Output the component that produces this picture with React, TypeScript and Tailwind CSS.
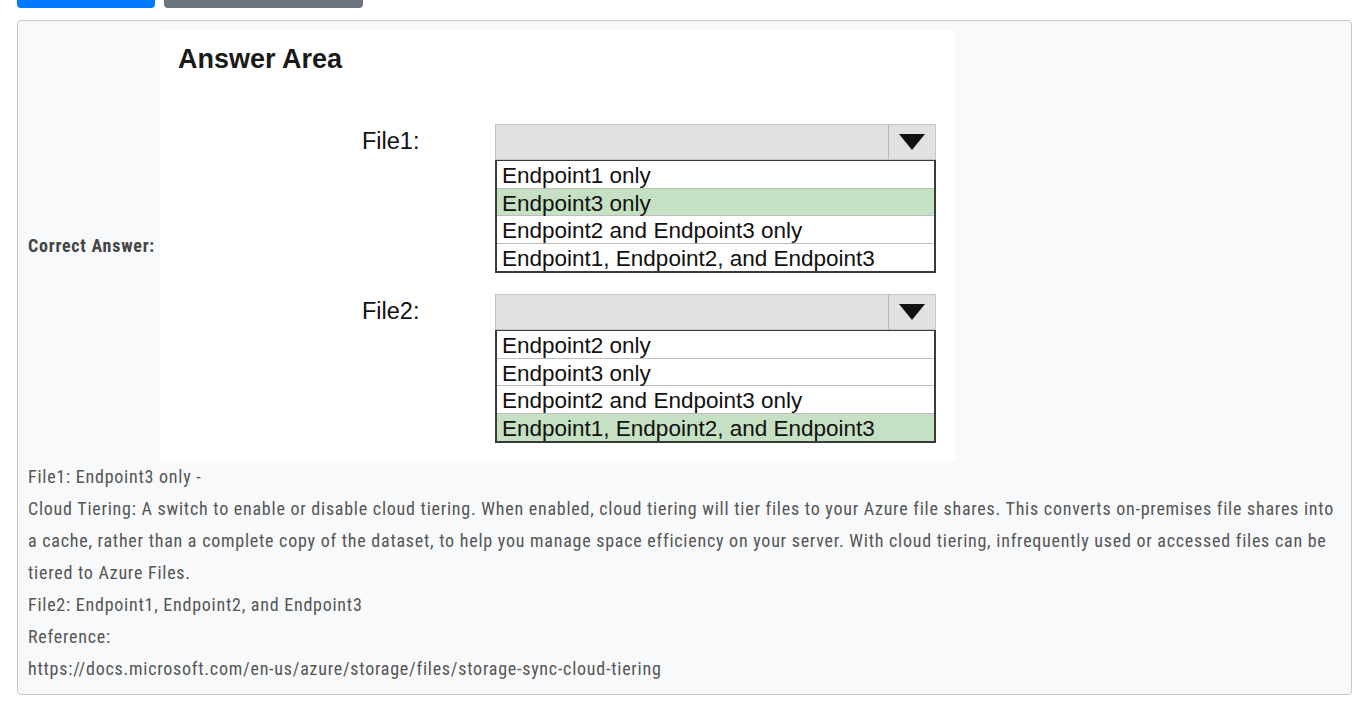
import React from 'react';

const file1 = [
  { text: 'Endpoint1 only', ok: false },
  { text: 'Endpoint3 only', ok: true },
  { text: 'Endpoint2 and Endpoint3 only', ok: false },
  { text: 'Endpoint1, Endpoint2, and Endpoint3', ok: false },
];

const file2 = [
  { text: 'Endpoint2 only', ok: false },
  { text: 'Endpoint3 only', ok: false },
  { text: 'Endpoint2 and Endpoint3 only', ok: false },
  { text: 'Endpoint1, Endpoint2, and Endpoint3', ok: true },
];

function Dropdown({ label, options }: { label: string; options: { text: string; ok: boolean }[] }) {
  return (
    <div className="flex">
      <div className="w-[133px] ml-[202px] pt-[1px] text-[23.5px] leading-[32px] text-[#111]">{label}</div>
      <div className="w-[441px]">
        {/* closed select */}
        <div className="h-[36px] flex bg-[#e1e1e1] border border-[#c4c4c4]">
          <div className="flex-1" />
          <div className="w-[47px] border-l border-[#b9b9b9] flex items-center justify-center">
            <svg width="26" height="16" viewBox="0 0 26 16">
              <polygon points="0,0 26,0 13,16" fill="#111" />
            </svg>
          </div>
        </div>
        {/* option list */}
        <div className="border-2 border-[#3a3a3a] border-t-[1.5px]">
          {options.map((o, i) => (
            <div
              key={o.text}
              className={`h-[27.5px] pl-[5px] pt-[1px] text-[22.5px] leading-[27px] text-[#111] ${
                i < options.length - 1 ? 'border-b border-[#bdbdbd]' : ''
              } ${o.ok ? 'bg-[#c5e0c3]' : 'bg-white'}`}
            >
              {o.text}
            </div>
          ))}
        </div>
      </div>
    </div>
  );
}

export default function App() {
  return (
    <div className="min-h-screen bg-white font-['Roboto',sans-serif] [font-stretch:condensed] tracking-[0.75px]">
      {/* Buttons, scrolled off the top */}
      <div className="flex gap-[9px] ml-[17px] -mt-[30px]">
        <button className="w-[138px] h-[38px] rounded bg-[#007bff]" />
        <button className="w-[199px] h-[38px] rounded bg-[#6c757d]" />
      </div>

      <div className="ml-[17px] mr-[19px] mt-[12px] border border-[#c8c8c8] rounded-sm bg-[#f8f9fa] px-[10px] pt-[9px] pb-[9px]">
        <div className="flex items-center">
          <div className="w-[132px] text-[18px] font-bold text-[#444]">Correct Answer:</div>
          <div className="w-[795px] h-[431px] bg-white font-['Liberation_Sans',Arial,sans-serif] [font-stretch:normal] tracking-normal">
            <h2 className="pl-[18px] pt-[14px] text-[27px] leading-[30px] font-bold text-[#1a1a1a]">Answer Area</h2>
            <div className="mt-[50px] flex flex-col gap-[21px]">
              <Dropdown label="File1:" options={file1} />
              <Dropdown label="File2:" options={file2} />
            </div>
          </div>
        </div>
        <div className="text-[18px] leading-[32px] text-[#555]">
          <p>File1: Endpoint3 only -</p>
          <p>
            Cloud Tiering: A switch to enable or disable cloud tiering. When enabled, cloud tiering will tier files to your Azure file shares. This converts on-premises file shares into a cache, rather than a complete copy of the dataset, to help you manage space efficiency on your server. With cloud tiering, infrequently used or accessed files can be tiered to Azure Files.
          </p>
          <p>File2: Endpoint1, Endpoint2, and Endpoint3</p>
          <p>Reference:</p>
          <p>https://docs.microsoft.com/en-us/azure/storage/files/storage-sync-cloud-tiering</p>
        </div>
      </div>
    </div>
  );
}
